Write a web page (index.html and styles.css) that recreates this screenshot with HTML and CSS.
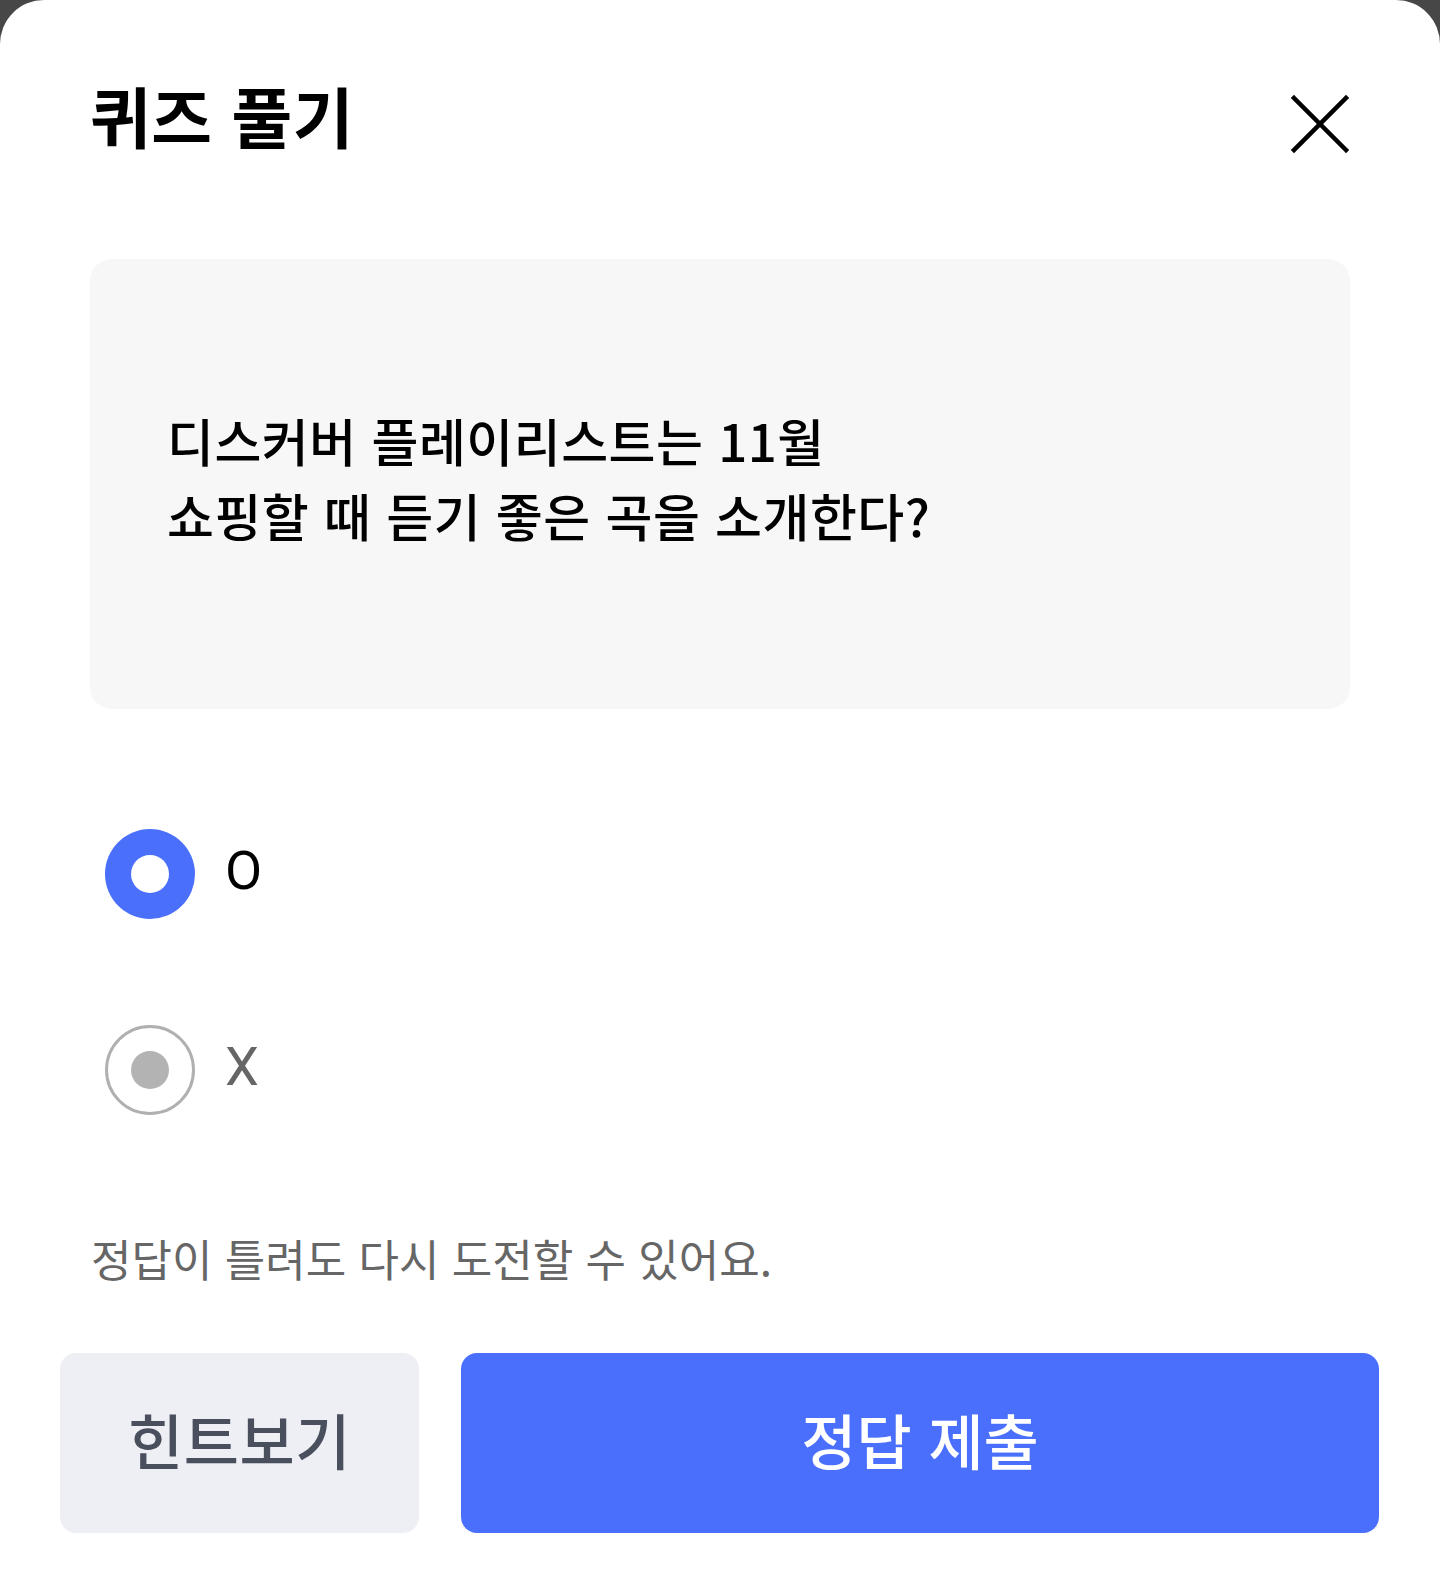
FILE: index.html
```html
<!DOCTYPE html>
<html lang="ko">
<head>
<meta charset="utf-8">
<title>퀴즈 풀기</title>
<link rel="stylesheet" href="styles.css">
</head>
<body>
<div class="sheet">
  <header class="header">
    <h1 class="title">퀴즈 풀기</h1>
    <button class="close" aria-label="닫기">
      <svg width="60" height="60" viewBox="0 0 60 60" fill="none" stroke="#000" stroke-width="4.5" stroke-linecap="square">
        <path d="M4 4 L56 56 M56 4 L4 56"/>
      </svg>
    </button>
  </header>

  <section class="card">
    <p class="question">디스커버 플레이리스트는 11월<br>쇼핑할 때 듣기 좋은 곡을 소개한다?</p>
  </section>

  <div class="options">
    <label class="option selected">
      <span class="radio"></span>
      <span class="opt-label">O</span>
    </label>
    <label class="option">
      <span class="radio"></span>
      <span class="opt-label">X</span>
    </label>
  </div>

  <p class="notice">정답이 틀려도 다시 도전할 수 있어요.</p>

  <div class="actions">
    <button class="btn btn-hint">힌트보기</button>
    <button class="btn btn-submit">정답 제출</button>
  </div>
</div>
</body>
</html>
```

FILE: styles.css
```css
* { box-sizing: border-box; }
html, body { margin: 0; padding: 0; }
body {
  background: #474747;
  font-family: "Noto Sans CJK KR", "Noto Sans", sans-serif;
  width: 1440px;
  height: 1592px;
  overflow: hidden;
}
.sheet {
  background: #fff;
  border-radius: 44px 44px 0 0;
  height: 1592px;
  display: flex;
  flex-direction: column;
}
.header {
  height: 240px;
  display: flex;
  align-items: center;
  justify-content: space-between;
  padding: 0 90px 0 90px;
}
.title {
  margin: 0 0 12px 0;
  font-size: 66px;
  font-weight: 700;
  letter-spacing: 0.5px;
  color: #000;
  line-height: 1;
}
.close {
  background: none;
  border: 0;
  padding: 0;
  width: 60px;
  height: 60px;
  display: flex;
  margin-top: 8px;
}
.card {
  margin: 19px 90px 0 90px;
  height: 450px;
  background: #f7f7f7;
  border-radius: 22px;
  display: flex;
  align-items: center;
  padding: 0 0 12px 77px;
}
.question {
  margin: 0;
  font-size: 51px;
  font-weight: 500;
  line-height: 75px;
  letter-spacing: 0.5px;
  color: #000;
}
.options {
  margin: 120px 0 0 105px;
  display: flex;
  flex-direction: column;
  gap: 106px;
}
.option {
  display: flex;
  align-items: center;
  gap: 30px;
  height: 90px;
}
.radio {
  width: 90px;
  height: 90px;
  border-radius: 50%;
  border: 3px solid #b0b0b0;
  display: flex;
  align-items: center;
  justify-content: center;
  flex: none;
}
.radio::after {
  content: "";
  width: 38px;
  height: 38px;
  border-radius: 50%;
  background: #b3b3b3;
}
.option.selected .radio {
  border: 0;
  background: #4a6ffb;
}
.option.selected .radio::after {
  background: #fff;
}
.opt-label {
  font-family: "Roboto", "Noto Sans", sans-serif;
  font-size: 54px;
  color: #666;
  line-height: 1;
  margin-bottom: 6px;
}
.option.selected .opt-label { color: #000; }
.notice {
  margin: 113px 0 0 91px;
  font-size: 44px;
  line-height: 60px;
  letter-spacing: 0;
  color: #666;
}
.actions {
  margin: 65px 61px 0 60px;
  display: flex;
  gap: 42px;
  height: 180px;
}
.btn {
  border: 0;
  border-radius: 16px;
  font-family: "Noto Sans CJK KR", "Noto Sans", sans-serif;
  font-size: 60px;
  font-weight: 500;
  letter-spacing: 0;
  padding: 0 0 10px 0;
}
.btn-hint {
  width: 359px;
  background: #eeeff4;
  color: #4a4f5e;
  letter-spacing: 0.5px;
}
.btn-submit {
  flex: 1;
  background: #4a6ffd;
  color: #fff;
}
```
